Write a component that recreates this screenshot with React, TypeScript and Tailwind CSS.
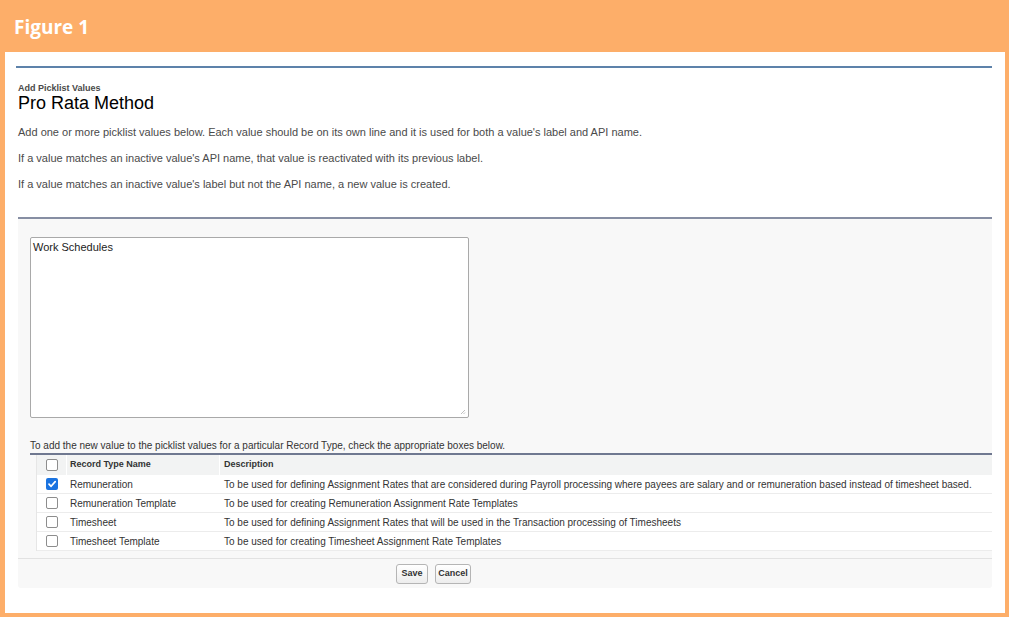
import React from "react";

const rows = [
  { name: "Remuneration", desc: "To be used for defining Assignment Rates that are considered during Payroll processing where payees are salary and or remuneration based instead of timesheet based.", checked: true },
  { name: "Remuneration Template", desc: "To be used for creating Remuneration Assignment Rate Templates", checked: false },
  { name: "Timesheet", desc: "To be used for defining Assignment Rates that will be used in the Transaction processing of Timesheets", checked: false },
  { name: "Timesheet Template", desc: "To be used for creating Timesheet Assignment Rate Templates", checked: false },
];

function Box({ checked }: { checked?: boolean }) {
  if (checked) {
    return (
      <span className="flex h-[12px] w-[12px] items-center justify-center rounded-[2px] bg-[#1a73e0]">
        <svg width="10" height="10" viewBox="0 0 10 10">
          <path d="M2 5.2 L4.1 7.3 L8.2 2.6" fill="none" stroke="#fff" strokeWidth="1.7" strokeLinecap="round" strokeLinejoin="round" />
        </svg>
      </span>
    );
  }
  return <span className="block h-[12px] w-[12px] rounded-[2px] border border-[#8d8d8d] bg-white" />;
}

export default function App() {
  return (
    <div className="flex h-[617px] w-[1009px] flex-col bg-[#fdae69] font-['Liberation_Sans',Arial,sans-serif]">
      <div className="flex h-[52px] items-center pl-[14px] pt-[2px]">
        <span className="font-['Open_Sans',sans-serif] text-[19px] font-bold leading-none text-white">Figure 1</span>
      </div>
      <div className="mb-[4px] ml-[5px] mr-[4px] flex-1 bg-white pl-[11px] pr-[13px] pt-[14px]">
        <div className="h-[2px] bg-[#5d82aa]" />
        <div className="pl-[2px]">
          <div className="mt-[15px] text-[9px] font-bold leading-[11px] text-[#4a4a4a]">Add Picklist Values</div>
          <div className="text-[18px] leading-[18px] text-black">Pro Rata Method</div>
          <p className="mt-[14px] text-[11px] leading-[13px] text-[#4a4a4a]">Add one or more picklist values below. Each value should be on its own line and it is used for both a value's label and API name.</p>
          <p className="mt-[13px] text-[11px] leading-[13px] text-[#4a4a4a]">If a value matches an inactive value's API name, that value is reactivated with its previous label.</p>
          <p className="mt-[13px] text-[11px] leading-[13px] text-[#4a4a4a]">If a value matches an inactive value's label but not the API name, a new value is created.</p>
          <div className="mt-[26px] rounded-b-[3px] border-t-2 border-[#868ea3] bg-[#f8f8f8]">
            <div className="pl-[12px] pt-[18px]">
              <div className="relative h-[181px] w-[439px] rounded-[2px] border border-[#a9a9a9] bg-white px-[2px] py-[3px] text-[11px] leading-[13px] text-[#222]">
                Work Schedules
                <svg className="absolute bottom-[2px] right-[2px]" width="6" height="6" viewBox="0 0 6 6">
                  <path d="M5 1 L1 5 M5 3.5 L3.5 5" stroke="#b0b0b0" strokeWidth="0.8" />
                </svg>
              </div>
              <div className="mt-[21px] text-[10px] leading-[14px] text-[#333]">To add the new value to the picklist values for a particular Record Type, check the appropriate boxes below.</div>
              <div className="border-t-2 border-[#6f7890] pl-[6px]">
                <div className="border-l border-[#e6e6e6] bg-white">
                  <div className="flex h-[20px] items-center bg-[#f2f3f3] text-[9px] font-bold text-[#333]">
                    <div className="flex w-[29px] shrink-0 justify-center"><Box /></div>
                    <div className="flex h-full w-[153px] shrink-0 items-center border-l border-white pl-[3px]">Record Type Name</div>
                    <div className="flex h-full flex-1 items-center border-l border-white pl-[4px]">Description</div>
                  </div>
                  {rows.map((r) => (
                    <div key={r.name} className="flex h-[19px] items-center border-b border-[#ececec] text-[10px] text-[#333]">
                      <div className="flex w-[29px] shrink-0 justify-center"><Box checked={r.checked} /></div>
                      <div className="w-[153px] shrink-0 pl-[4px]">{r.name}</div>
                      <div className="flex-1 whitespace-nowrap pl-[5px]">{r.desc}</div>
                    </div>
                  ))}
                </div>
              </div>
            </div>
            <div className="mt-[7px] flex h-[30px] items-center gap-[7px] border-t border-[#e2e2e2] pl-[378px]">
              <button className="h-[20px] w-[32px] rounded-[3px] border border-[#b5b5b5] bg-gradient-to-b from-white to-[#ededed] text-[9px] font-bold text-[#333]">Save</button>
              <button className="h-[20px] w-[36px] rounded-[3px] border border-[#b5b5b5] bg-gradient-to-b from-white to-[#ededed] text-[9px] font-bold text-[#333]">Cancel</button>
            </div>
          </div>
        </div>
      </div>
    </div>
  );
}
